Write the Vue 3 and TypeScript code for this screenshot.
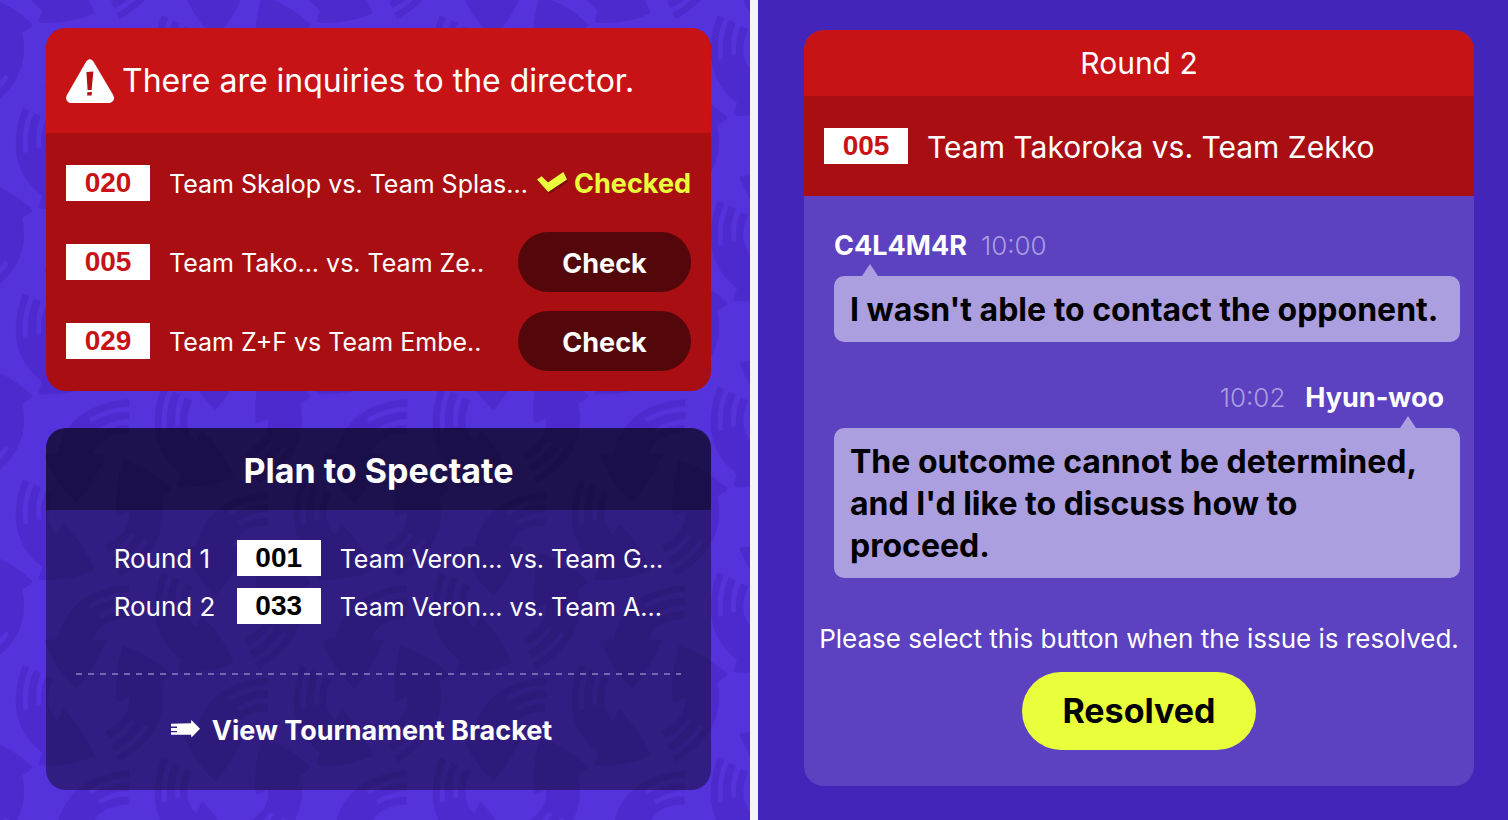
<script setup lang="ts">
interface Inquiry {
  code: string
  match: string
  checked: boolean
}

interface Plan {
  round: string
  code: string
  match: string
}

interface Message {
  author: string
  time: string
  text: string
  own: boolean
}

const inquiries: Inquiry[] = [
  { code: '020', match: 'Team Skalop vs. Team Splas...', checked: true },
  { code: '005', match: 'Team Tako... vs. Team Ze..', checked: false },
  { code: '029', match: 'Team Z+F vs Team Embe..', checked: false },
]

const plans: Plan[] = [
  { round: 'Round 1', code: '001', match: 'Team Veron... vs. Team G...' },
  { round: 'Round 2', code: '033', match: 'Team Veron... vs. Team A...' },
]

const messages: Message[] = [
  { author: 'C4L4M4R', time: '10:00', text: "I wasn't able to contact the opponent.", own: false },
  {
    author: 'Hyun-woo',
    time: '10:02',
    text: "The outcome cannot be determined, and I'd like to discuss how to proceed.",
    own: true,
  },
]

// Copies of the arrow trio needed to fill one pattern tile edge to edge
const copies: string[] = [
  'translate(0 0)',
  'translate(834 0)',
  'translate(0 -557)',
  'translate(0 557)',
  'translate(834 -557)',
  'translate(417 278)',
  'translate(417 -279)',
  'translate(-417 278)',
  'translate(-417 -279)',
]
</script>

<template>
  <div class="page">
    <main class="pane overview">
      <svg class="backdrop" aria-hidden="true">
        <defs>
          <path
            id="swirl"
            d="M68 225C30 330 40 420 126 488L116 521Q117 527 124 527Q210 530 280 500Q285 498 283 493Q255 425 194 360Q190 356 187 361L172 391C142 366 136 320 160 268L138 259Q118 300 124 345L110 347Q104 290 123 249L102 240Q78 290 84 357L70 360Q62 290 88 233Z"
          />
          <g id="trio">
            <use href="#swirl" />
            <use href="#swirl" transform="translate(226 152) rotate(65.5) translate(-153 -441)" />
            <use href="#swirl" transform="translate(433 296) rotate(220) translate(-153 -441)" />
          </g>
          <pattern
            id="swirls"
            width="834"
            height="557"
            patternUnits="userSpaceOnUse"
            patternTransform="translate(0 33) scale(0.3333)"
          >
            <g class="swirl-fill">
              <use v-for="copy in copies" :key="copy" href="#trio" :transform="copy" />
            </g>
          </pattern>
        </defs>
        <rect width="100%" height="100%" fill="url(#swirls)" />
      </svg>

      <section class="card alert">
        <header class="alert-head">
          <svg class="warning" viewBox="0 0 48 44" aria-hidden="true">
            <path
              fill="#fff"
              d="M20.2 2.6Q24 -2 27.4 2.6L47 35.8Q50 41.5 44 44H4.200Q-1.500 42 .8 36.200Z"
            />
            <path fill="#b30f14" d="M20.400 13L27.400 12.400L25.600 31H21.600ZM21.200 33.200L26 33L25.600 36.400H21.200Z" />
          </svg>
          <h1>There are inquiries to the director.</h1>
        </header>
        <ul class="inquiries">
          <li v-for="item in inquiries" :key="item.code" class="inquiry">
            <span class="badge red">{{ item.code }}</span>
            <span class="match">{{ item.match }}</span>
            <span v-if="item.checked" class="checked">
              <svg viewBox="0 0 32 24" aria-hidden="true">
                <path
                  class="tick-shadow"
                  transform="translate(1.500 2)"
                  d="M0 8.500L4.600 5.200L11 11.500L26.400 1L30 8.500L11.200 21Z"
                />
                <path fill="#e9ff3b" d="M0 8.500L4.600 5.200L11 11.500L26.400 1L30 8.500L11.200 21Z" />
              </svg>
              Checked
            </span>
            <button v-else type="button" class="check">Check</button>
          </li>
        </ul>
      </section>

      <section class="card spectate">
        <h2>Plan to Spectate</h2>
        <ul class="plans">
          <li v-for="plan in plans" :key="plan.code" class="plan">
            <span class="round">{{ plan.round }}</span>
            <span class="badge">{{ plan.code }}</span>
            <span class="match">{{ plan.match }}</span>
          </li>
        </ul>
        <hr />
        <a class="bracket" href="#bracket">
          <svg viewBox="0 0 30 22" aria-hidden="true">
            <path
              fill="#fff"
              d="M0 3.700L20 3.300L20.300 0L29 8.700L20.500 17.600L20 14.700H0V12.200H6V10.900H0V7.900H6V6.400H0Z"
            />
          </svg>
          View Tournament Bracket
        </a>
      </section>
    </main>

    <aside class="pane detail">
      <section class="card chat">
        <h2>Round 2</h2>
        <div class="versus">
          <span class="badge red">005</span>
          <span class="teams">Team Takoroka vs. Team Zekko</span>
        </div>
        <div class="thread">
          <article v-for="message in messages" :key="message.author" :class="{ own: message.own }">
            <div class="meta">
              <strong>{{ message.author }}</strong>
              <time>{{ message.time }}</time>
            </div>
            <p class="bubble">{{ message.text }}</p>
          </article>
        </div>
        <footer>
          <p>Please select this button when the issue is resolved.</p>
          <button type="button" class="resolved">Resolved</button>
        </footer>
      </section>
    </aside>
  </div>
</template>

<style>
body {
  margin: 0;
  background: #f5f5f5;
}
</style>

<style scoped>
.page {
  display: grid;
  grid-template-columns: 1fr 1fr;
  gap: 8px;
  min-height: 100vh;
  font-family: Inter, 'Liberation Sans', sans-serif;
  font-size: 26px;
  font-weight: 400;
  color: #fff;
}

h1,
h2,
p,
ul {
  margin: 0;
  padding: 0;
  font-weight: inherit;
  list-style: none;
}

button {
  border: 0;
  font: inherit;
  font-weight: 700;
  cursor: pointer;
}

.pane {
  position: relative;
  box-sizing: border-box;
  overflow: hidden;
}

.overview {
  display: flex;
  flex-direction: column;
  gap: 37px;
  padding: 28px 39px 30px 46px;
  background: #5432dc;
}

.detail {
  display: flex;
  padding: 30px 34px 34px 46px;
  background: #4425b9;
}

.backdrop {
  position: absolute;
  inset: 0;
  width: 100%;
  height: 100%;
}

.swirl-fill {
  fill: #4c2acd;
}

.card {
  position: relative;
  border-radius: 20px;
  overflow: hidden;
}

.alert {
  background: #a90f12;
}

.alert-head {
  display: flex;
  align-items: center;
  gap: 8px;
  height: 105px;
  padding: 0 20px;
  background: #c71216;
}

.alert-head h1 {
  font-size: 32px;
  white-space: nowrap;
}

.warning {
  width: 48px;
  height: 44px;
}

.inquiries {
  display: flex;
  flex-direction: column;
  gap: 19px;
  padding: 20px;
}

.inquiry {
  display: flex;
  align-items: center;
  gap: 19px;
  height: 60px;
  white-space: nowrap;
}

.match {
  flex: 1;
  min-width: 0;
  padding-top: 2px;
  font-size: 25px;
}

.badge {
  flex: none;
  width: 84px;
  background: #fff;
  color: #000;
  font: 700 28px/36px 'Liberation Sans', Arial, sans-serif;
  text-align: center;
}

.badge.red {
  color: #c71216;
}

.checked {
  display: flex;
  align-items: center;
  gap: 5px;
  color: #e9ff3b;
  font-size: 27px;
  font-weight: 700;
}

.checked svg {
  width: 32px;
  height: 24px;
}

.tick-shadow {
  fill: #7d0b0e;
}

.check {
  width: 173px;
  height: 60px;
  padding: 2px 0 0;
  border-radius: 30px;
  background: #54070a;
  color: #fff;
  font-size: 27px;
}

.spectate {
  flex: 1;
  display: flex;
  flex-direction: column;
  align-items: center;
  background: rgba(15, 10, 40, 0.5);
}

.spectate h2 {
  align-self: stretch;
  padding-top: 4px;
  background: rgba(0, 0, 0, 0.4);
  font-size: 34px;
  font-weight: 700;
  line-height: 78px;
  text-align: center;
}

.plans {
  display: flex;
  flex-direction: column;
  gap: 12px;
  margin-top: 30px;
  padding-left: 20px;
}

.plan {
  display: flex;
  align-items: center;
  gap: 19px;
  height: 36px;
  white-space: nowrap;
}

.round {
  width: 104px;
}

.spectate hr {
  align-self: stretch;
  height: 2px;
  margin: 49px 30px 38px;
  border: 0;
  background: repeating-linear-gradient(90deg, #7767ae 0 6px, transparent 6px 12px);
}

.bracket {
  display: flex;
  align-items: center;
  gap: 11px;
  padding-right: 34px;
  color: #fff;
  font-size: 27px;
  font-weight: 700;
  line-height: 36px;
  text-decoration: none;
}

.bracket svg {
  width: 30px;
  height: 22px;
}

.chat {
  flex: 1;
  background: #5c41c1;
}

.chat h2 {
  background: #c71216;
  font-size: 30px;
  line-height: 66px;
  text-align: center;
}

.versus {
  display: flex;
  align-items: center;
  gap: 19px;
  height: 100px;
  padding: 0 20px;
  background: #a90f12;
  font-size: 30px;
  white-space: nowrap;
}

.teams {
  padding-top: 2px;
}

.thread {
  display: flex;
  flex-direction: column;
  gap: 36px;
  padding: 30px 14px 0 30px;
}

.meta {
  display: flex;
  gap: 14px;
  padding-top: 2px;
  line-height: 36px;
}

.meta strong {
  font-size: 27px;
  font-weight: 700;
}

.meta time {
  color: #ab9fdf;
  font-weight: 300;
}

.own .meta {
  flex-direction: row-reverse;
  gap: 20px;
  padding-right: 16px;
}

.bubble {
  position: relative;
  margin-top: 12px;
  padding: 13px 16px 11px;
  border-radius: 10px;
  background: #ab9fdf;
  color: #000;
  font-size: 32px;
  font-weight: 700;
  line-height: 42px;
}

.bubble::before {
  content: '';
  position: absolute;
  top: -12px;
  left: 28px;
  border: 8px solid transparent;
  border-top: 0;
  border-bottom: 12px solid #ab9fdf;
}

.own .bubble::before {
  right: 44px;
  left: auto;
}

footer {
  display: flex;
  flex-direction: column;
  align-items: center;
  gap: 14px;
  margin-top: 42px;
  line-height: 38px;
  white-space: nowrap;
}

.resolved {
  width: 234px;
  height: 78px;
  border-radius: 39px;
  background: #e9ff3b;
  color: #000;
  font-size: 34px;
}
</style>
